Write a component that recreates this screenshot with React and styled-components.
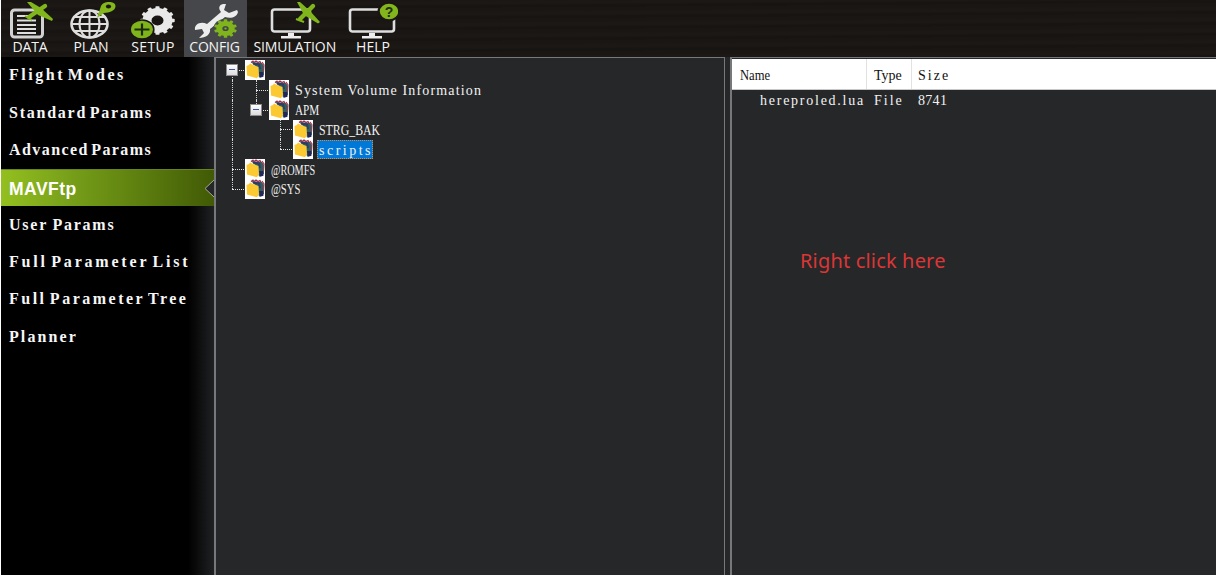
import React from "react";
import styled, { createGlobalStyle, css } from "styled-components";

const GlobalStyle = createGlobalStyle`
  * { box-sizing: border-box; }
  body { margin: 0; background: #fff; overflow: hidden; }
`;

const Window = styled.div`
  width: 1217px;
  height: 577px;
  padding: 0 1px 2px 1px;
  display: flex;
  flex-direction: column;
  background: #fff;
`;

const Toolbar = styled.header`
  display: flex;
  flex: none;
  height: 57px;
  background: repeating-linear-gradient(179.6deg, #191613 0 3px, #1b1815 5px 7px, #171411 9px 11px);
`;

const Tool = styled.button`
  width: ${(p) => p.$w}px;
  height: 57px;
  padding: 2px 0 0;
  border: 0;
  display: flex;
  flex-direction: column;
  align-items: center;
  background: ${(p) => (p.$active ? "#46474a" : "transparent")};
  color: #f4f4f4;
  svg { display: block; flex: none; }
`;

const ToolLabel = styled.span`
  position: relative;
  left: ${(p) => p.$dx || 0}px;
  font: 14px/14px "Open Sans", "Noto Sans", sans-serif;
  letter-spacing: ${(p) => p.$ls || 0}px;
  white-space: nowrap;
`;

const Body = styled.div`
  flex: 1;
  min-height: 0;
  display: flex;
  background: #262729;
`;

const Sidebar = styled.nav`
  width: 213px;
  display: flex;
  flex-direction: column;
  background: linear-gradient(90deg, #000 187px, #202123 213px);
`;

const NavItem = styled.a`
  position: relative;
  height: 37.35px;
  padding: 0 0 1px 8px;
  display: flex;
  align-items: center;
  color: #f6f6f6;
  font: bold 16px/20px "Liberation Serif", serif;
  letter-spacing: ${(p) => p.$ls}px;
  word-spacing: ${(p) => p.$ws || 0}px;
  white-space: nowrap;
  ${(p) => p.$active && css`
    padding: 1px 0 0 8px;
    background: linear-gradient(90deg, #93c01f 0, #7ba31b 60px, #648811 120px, #415a06 213px);
    border-top: 1px solid #68851f;
    font: bold 17.500px/20px "Liberation Sans", sans-serif;
    color: #fff;
  `}
`;

const Notch = styled.svg`
  position: absolute;
  right: 0;
  top: 10px;
`;

const Panel = styled.section`
  display: flex;
  flex-direction: column;
  width: ${(p) => p.$w}px;
  margin-right: ${(p) => p.$gap || 0}px;
  border: solid #77787b;
  border-width: ${(p) => p.$borders};
`;

const Tree = styled.div`
  padding: 2px 0 0 4px;
`;

const TreeRow = styled.div`
  display: flex;
  align-items: center;
  height: 19.85px;
`;

const Guide = styled.span`
  position: relative;
  flex: none;
  width: 24px;
  height: 100%;
  display: flex;
  align-items: center;
  justify-content: center;
  &::before {
    content: "";
    position: absolute;
    left: 12px;
    top: ${(p) => (p.$kind === "root" ? "50%" : 0)};
    bottom: ${(p) => (p.$kind === "last" ? "50%" : 0)};
    border-left: ${(p) => (p.$kind === "blank" ? "0" : "1px dotted #d4d4d4")};
  }
  &::after {
    content: "";
    position: absolute;
    left: 12px;
    right: 0;
    top: 50%;
    border-top: ${(p) => (p.$kind === "blank" || p.$kind === "line" ? "0" : "1px dotted #e4e4e4")};
  }
`;

const Toggle = styled.span`
  position: relative;
  z-index: 1;
  width: 12px;
  height: 12px;
  border: 1px solid #8c8c8c;
  background: linear-gradient(#fff, #dcdcdc);
  display: flex;
  align-items: center;
  justify-content: center;
  &::before { content: ""; width: 6px; height: 1px; background: #3c55a5; }
`;

const NodeLabel = styled.span`
  margin-left: 4px;
  height: 19px;
  padding: 0 1px;
  width: ${(p) => (p.$selected ? "56px" : "auto")};
  border: 1px ${(p) => (p.$selected ? "dotted #d98a3c" : "solid transparent")};
  background: ${(p) => (p.$selected ? "#0078d7" : "transparent")};
  line-height: 17px;
`;

const Text = styled.span`
  display: inline-block;
  font-family: "Liberation Serif", serif;
  font-size: 14px;
  color: ${(p) => p.$color || "#f2f2f2"};
  letter-spacing: ${(p) => p.$ls || 0}px;
  transform: scaleX(${(p) => p.$sx || 1});
  transform-origin: left;
  white-space: nowrap;
`;

const HeaderRow = styled.div`
  display: grid;
  grid-template-columns: 135px 45px 1fr;
  height: 31px;
  margin: 1px 0 0 0;
  background: #fff;
  border-bottom: 1px solid #c8c8c8;
`;

const HeaderCell = styled.div`
  height: 30px;
  padding: 0 0 0 ${(p) => p.$pad}px;
  line-height: 31px;
  border-right: ${(p) => (p.$end ? "0" : "1px solid #e2e2e2")};
`;

const FileRow = styled.div`
  display: grid;
  grid-template-columns: 135px 45px 1fr;
  height: 20px;
  line-height: 20px;
`;

const FileCell = styled.div`
  padding-left: ${(p) => p.$pad}px;
`;

const Note = styled.p`
  margin: 138px 0 0 68px;
  font: 20px/26px "Noto Sans", sans-serif;
  letter-spacing: 0.17px;
  color: #dc3636;
`;

const DataIcon = () => (
  <svg width="46" height="38" viewBox="0 0 46 38">
    <rect x="3.5" y="8" width="31" height="27" rx="3" fill="none" stroke="#d2d2d2" strokeWidth="3" />
    <path d="M9 14H22M9 18.5H28M9 23H28M9 27H28M9 31H28" stroke="#dedede" strokeWidth="2" />
    <path d="M19 0H23L33 6 45 17 44 19 30 13Z" fill="#80b51c" />
    <path d="M21 15 37 4" stroke="#80b51c" strokeWidth="4.4" strokeLinecap="round" />
    <path d="M17 14 24 18" stroke="#80b51c" strokeWidth="2" />
  </svg>
);

const PlanIcon = () => (
  <svg width="46" height="38" viewBox="0 0 46 38" overflow="visible">
    <g fill="none" stroke="#dedede" strokeWidth="2">
      <ellipse cx="21.5" cy="22" rx="18" ry="13.5" strokeWidth="2.6" />
      <ellipse cx="21.5" cy="22" rx="10" ry="13.5" />
      <path d="M21.5 8V36M3 22H40M6 15H37M6 29H37" />
    </g>
    <path d="M29 16 33 4C35-1.500 47.500-1.500 47.500 4C47.500 9 41 10.500 36 11Z" fill="#83b71b" />
    <ellipse cx="40.5" cy="4.5" rx="2.6" ry="2" fill="#1a1714" />
  </svg>
);

const Gear = ({ cx, cy, r, teeth, color, tooth, ring, flat = 1 }) => (
  <g transform={`translate(${cx} ${cy}) scale(1 ${flat})`}>
    <circle r={r} fill="none" stroke={color} strokeWidth={ring} />
    {Array.from({ length: teeth }, (_, i) => (
      <rect key={i} x={-tooth / 2} y={-r - ring / 2 - 2.2} width={tooth} height="4" rx="0.8" fill={color} transform={`rotate(${(i * 360) / teeth})`} />
    ))}
  </g>
);

const SetupIcon = () => (
  <svg width="48" height="38" viewBox="0 0 48 38">
    <Gear cx={28.5} cy={18.5} r={10.5} teeth={12} color="#e9e9e9" tooth={4.2} ring={9} flat={0.83} />
    <ellipse cx="13" cy="27.5" rx="12.6" ry="10.2" fill="#1a1613" />
    <ellipse cx="13" cy="27.5" rx="11" ry="8.8" fill="#80b41c" />
    <path d="M13 21.500V33.500M5.500 27.500H20.500" stroke="#1d2a08" strokeWidth="2.2" />
  </svg>
);

const ConfigIcon = () => (
  <svg width="48" height="38" viewBox="0 0 48 38">
    <path d="M31 2 34 2 32 8 37 11 45 8 46 10C45 15 39 17 33 15L18 27C19 32 14 36 7 36L12 31 10 27 3 28C2 22 9 19 15 22L29 10C26 6 27 3 31 2Z" fill="#ececec" />
    <ellipse cx="33.5" cy="26.5" rx="12" ry="9.800" fill="#46474a" />
    <Gear cx={33.5} cy={26.5} r={6.2} teeth={10} color="#80b41c" tooth={3.4} ring={6} flat={0.82} />
    <ellipse cx="33.5" cy="26.5" rx="1.2" ry="1" fill="#80b41c" />
  </svg>
);

const Monitor = ({ w = 38 }) => (
  <>
    <rect x="2" y="7.5" width={w} height="22" rx="2.5" fill="none" stroke="#dedede" strokeWidth="2.6" />
    <path d={`M${w / 2 - 1} 31h6v3h7v2.500h-20v-2.500h7Z`} fill="#ededed" />
  </>
);

const SimulationIcon = () => (
  <svg width="50" height="38" viewBox="0 0 50 38">
    <Monitor />
    <path d="M27 0H30L40 9 50 20 48 21.500 34 13Z" fill="#80b51c" />
    <path d="M30 17 43 4" stroke="#80b51c" strokeWidth="4.400" strokeLinecap="round" />
    <path d="M26 17 34 20" stroke="#80b51c" strokeWidth="2" />
  </svg>
);

const HelpIcon = () => (
  <svg width="50" height="38" viewBox="0 0 50 38">
    <Monitor w={44} />
    <ellipse cx="41" cy="9.500" rx="11.500" ry="9.800" fill="#1a1613" />
    <ellipse cx="41" cy="9.500" rx="9.200" ry="7.800" fill="#82b61c" />
    <text x="41" y="14.500" textAnchor="middle" fontFamily="Liberation Sans, sans-serif" fontWeight="bold" fontSize="14" fill="#20300a">?</text>
  </svg>
);

const FolderSvg = styled.svg`
  flex: none;
  display: block;
  margin-left: 1px;
  background: #fff;
`;

const Folder = () => (
  <FolderSvg width="20" height="19.85" viewBox="0 0 20 20" preserveAspectRatio="none">
    <path d="M6 2 17 3 19 6 19 15 14 18 12 8Z" fill="#2d6263" />
    <path d="M6 2.500 8 1 9 2.500 11 1 13 2.500 15 1.500 16 3.500" fill="none" stroke="#a32846" strokeWidth="1.200" />
    <path d="M8 3.500 14 4.500 15 9" fill="none" stroke="#303b66" strokeWidth="2" />
    <path d="M17 2 19 5 18.500 12" fill="none" stroke="#a93552" strokeWidth="1.200" />
    <path d="M14 12 18 12 18.500 17 15 18Z" fill="#24255a" />
    <path d="M1.500 6 4 5 5 3.500 8 5 13.500 7 14 15 12 18.500 2 15.500Z" fill="#fbc932" />
  </FolderSvg>
);

const tools = [
  { label: "DATA", w: 59, Icon: DataIcon, ls: -0.1, dx: -0.5 },
  { label: "PLAN", w: 62, Icon: PlanIcon, ls: 0 },
  { label: "SETUP", w: 62, Icon: SetupIcon, ls: 0.3, dx: 0 },
  { label: "CONFIG", w: 63, Icon: ConfigIcon, ls: -0.2, dx: -1 },
  { label: "SIMULATION", w: 95, Icon: SimulationIcon, ls: -0.1, dx: 0.3 },
  { label: "HELP", w: 62, Icon: HelpIcon, ls: 0, dx: 0 },
];

const pages = [
  { name: "Flight Modes", ls: 2.55, ws: -4 },
  { name: "Standard Params", ls: 1.75, ws: -3 },
  { name: "Advanced Params", ls: 1.42, ws: -3 },
  { name: "MAVFtp", ls: 0.5 },
  { name: "User Params", ls: 1.75, ws: -1 },
  { name: "Full Parameter List", ls: 2.8, ws: -3.3 },
  { name: "Full Parameter Tree", ls: 2.5, ws: -3.2 },
  { name: "Planner", ls: 2.1 },
];

const nodes = [
  { guides: ["root"], open: true, label: "" },
  { guides: ["line", "tee"], label: "System Volume Information", ls: 1.16 },
  { guides: ["line", "last"], open: true, label: "APM", sx: 0.8 },
  { guides: ["line", "blank", "tee"], label: "STRG_BAK", sx: 0.845 },
  { guides: ["line", "blank", "last"], label: "scripts", ls: 2.5, selected: true },
  { guides: ["tee"], label: "@ROMFS", sx: 0.73 },
  { guides: ["last"], label: "@SYS", sx: 0.76 },
];

export default function App() {
  return (
    <Window>
      <GlobalStyle />
      <Toolbar>
        {tools.map(({ label, w, Icon, ls, dx }) => (
          <Tool key={label} $w={w} $active={label === "CONFIG"}>
            <Icon />
            <ToolLabel $ls={ls} $dx={dx}>{label}</ToolLabel>
          </Tool>
        ))}
      </Toolbar>
      <Body>
        <Sidebar>
          {pages.map(({ name, ls, ws }) => (
            <NavItem key={name} $ls={ls} $ws={ws} $active={name === "MAVFtp"}>
              {name}
              {name === "MAVFtp" && (
                <Notch width="10" height="17" viewBox="0 0 10 17">
                  <path d="M10 0 1 8.5 10 17" fill="#262729" stroke="#a4ad90" />
                </Notch>
              )}
            </NavItem>
          ))}
        </Sidebar>
        <Panel $w={511} $gap={5} $borders="1px 1px 0 2px">
          <Tree>
            {nodes.map((n) => (
              <TreeRow key={n.label}>
                {n.guides.map((kind, i) => (
                  <Guide key={i} $kind={kind}>
                    {n.open && i === n.guides.length - 1 && <Toggle />}
                  </Guide>
                ))}
                <Folder />
                {n.label && (
                  <NodeLabel $selected={n.selected}>
                    <Text $ls={n.ls} $sx={n.sx}>{n.label}</Text>
                  </NodeLabel>
                )}
              </TreeRow>
            ))}
          </Tree>
        </Panel>
        <Panel $w={486} $borders="1px 0 0 2px">
          <HeaderRow>
            <HeaderCell $pad={8}><Text $color="#111" $sx={0.9}>Name</Text></HeaderCell>
            <HeaderCell $pad={7}><Text $color="#111">Type</Text></HeaderCell>
            <HeaderCell $pad={6} $end><Text $color="#111" $ls={2}>Size</Text></HeaderCell>
          </HeaderRow>
          <FileRow>
            <FileCell $pad={28}><Text $ls={1.75}>hereproled.lua</Text></FileCell>
            <FileCell $pad={7}><Text $ls={2}>File</Text></FileCell>
            <FileCell $pad={6}><Text $ls={0.3}>8741</Text></FileCell>
          </FileRow>
          <Note>Right click here</Note>
        </Panel>
      </Body>
    </Window>
  );
}
